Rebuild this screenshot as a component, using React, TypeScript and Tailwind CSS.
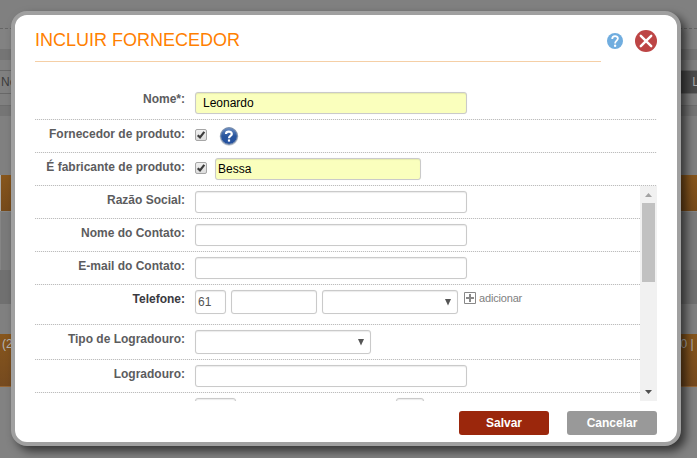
import type { ReactNode } from 'react';

const field =
  'rounded-[3px] border border-[#cacaca] bg-white shadow-[inset_0_1px_1px_rgba(0,0,0,0.08),0_0_1px_rgba(0,0,0,0.1)] outline-none text-[12px]';

function Row({ label, dark, first, className = 'h-[33px]', children }: { label: string; dark?: boolean; first?: boolean; className?: string; children?: ReactNode }) {
  return (
    <div className={`flex shrink-0 flex-col ${className}`}>
      <div className="flex min-h-0 flex-1 items-start">
        <label className={`w-[150px] shrink-0 whitespace-nowrap text-right text-[12px] leading-4 font-bold ${first ? 'pt-1' : 'pt-1.5'} ${dark ? 'text-[#3a3a40]' : 'text-[#5c5c5e]'}`}>{label}</label>
        <div className="ml-[10px] flex items-start pt-[5px]">{children}</div>
      </div>
      <Dots />
    </div>
  );
}

function Dots() {
  return <div className="h-px shrink-0 bg-[repeating-linear-gradient(90deg,#bdbdbd_0px,#bdbdbd_1px,#f4f4f4_1px,#f4f4f4_2px)]" />;
}

function Check() {
  return (
    <svg width="12" height="12" viewBox="0 0 12 12" className="mt-1 block">
      <defs>
        <linearGradient id="box" x1="0" y1="0" x2="0" y2="1">
          <stop offset="0" stopColor="#f0f0f0" />
          <stop offset="1" stopColor="#dcdcdc" />
        </linearGradient>
      </defs>
      <rect x=".5" y=".5" width="11" height="11" rx="1.5" fill="url(#box)" stroke="#a6a6a6" />
      <path d="M2.7 6.2 5 8.4 9.3 2.9" fill="none" stroke="#3c3c3c" strokeWidth="2.2" />
    </svg>
  );
}

function Help() {
  return (
    <svg width="20" height="20" viewBox="0 0 20 20" className="mt-[1px] ml-3 block">
      <defs>
        <linearGradient id="ball" x1="0" y1="0" x2="0" y2="1">
          <stop offset="0" stopColor="#6f90c4" />
          <stop offset=".5" stopColor="#28559d" />
          <stop offset="1" stopColor="#2450a0" />
        </linearGradient>
      </defs>
      <circle cx="10" cy="10.4" r="9.3" fill="#c3c8d0" />
      <circle cx="10" cy="10" r="8.3" fill="url(#ball)" stroke="#7189ab" strokeWidth="1" />
      <path d="M7 8C7 4.9 12.8 4.9 12.8 8c0 2-2.8 2-2.8 4.2" fill="none" stroke="#fff" strokeWidth="2.2" />
      <rect x="8.9" y="13.4" width="2.2" height="2.2" fill="#fff" />
    </svg>
  );
}

function Select({ className }: { className: string }) {
  return (
    <div className={`flex h-6 items-center justify-end pr-[5px] ${field} ${className}`}>
      <svg width="8" height="8" viewBox="0 0 8 8"><path d="M1 1h6L4 7.5z" fill="#555" /></svg>
    </div>
  );
}

function Backdrop() {
  return (
    <div className="flex h-[458px] flex-col bg-[#808080] text-[12px]">
      <div className="h-7" />
      <div className="h-px border-t border-dashed border-[#666]" />
      <div className="h-5 bg-[#828282]" />
      <div className="h-[11px] bg-[#757575]" />
      <div className="h-[10px] bg-[#808080]" />
      <div className="flex h-6 items-center justify-between border-y border-[#686868] bg-[#808080] text-[#3c3c3c]">
        <span className="pl-px">No</span>
        <span className="flex h-[22px] w-[18px] items-center justify-end bg-[#4a4a4a] text-[#aaa]"><span className="-mr-[2px]">L</span></span>
      </div>
      <div className="h-[11px]" />
      <div className="h-[11px] border-t border-[#6d6d6d] bg-[#757575]" />
      <div className="h-[59px] bg-[#808080]" />
      <div className="h-9 border-l border-[#aaa] bg-linear-to-b from-[#87561c] to-[#754a1b]" />
      <div className="h-[59px] border-t border-l border-[#858585] bg-[#7a7a7a]" />
      <div className="h-[34px] bg-[#707070]" />
      <div className="h-[30px] bg-[#808080]" />
      <div className="flex h-[53px] justify-between border-b border-[#956636] bg-linear-to-b from-[#87561c] to-[#754a1f] pt-px text-[#b5b5b5]">
        <span className="pl-[2px]">(2</span>
        <span className="whitespace-pre">0 | </span>
      </div>
      <div className="flex-1 bg-[#828282]" />
    </div>
  );
}

export default function App() {
  return (
    <div className="relative h-[458px] w-[697px] overflow-hidden font-['Liberation_Sans',Arial,sans-serif]">
      <Backdrop />
      <div className="absolute top-[11px] left-[11px] flex h-[435px] w-[670px] flex-col rounded-[16px] border-4 border-[#a0a0a0] bg-white px-5 shadow-[5px_5px_10px_rgba(0,0,0,0.6)]">
        <header className="flex h-[47px] shrink-0 items-start">
          <div className="h-[47px] w-[566px] border-b border-[#f5cfa6]">
            <h1 className="pt-[14px] text-[18px] leading-[22px] whitespace-nowrap text-[#ff8000]">INCLUIR FORNECEDOR</h1>
          </div>
          <svg width="16" height="16" viewBox="0 0 16 16" className="mt-[18px] ml-[6px] shrink-0">
            <circle cx="8" cy="8" r="8" fill="#70addf" />
            <path d="M5.2 6C5.2 2.2 10.9 2.3 10.9 5.6c0 2-2.8 2.2-2.8 4.8" fill="none" stroke="#fff" strokeWidth="1.8" />
            <circle cx="8.1" cy="12.8" r="1.2" fill="#fff" />
          </svg>
          <svg width="22" height="22" viewBox="0 0 22 22" className="mt-[15px] ml-3 shrink-0">
            <circle cx="11" cy="11" r="11" fill="#bd4545" />
            <path d="m5.8 5.8 10.4 10.4M16.2 5.8 5.8 16.2" stroke="#fff" strokeWidth="2.4" strokeLinecap="round" />
          </svg>
        </header>

        <div className="mt-[25px] shrink-0">
          <Row label="Nome*:" first>
            <input className={`h-[22px] w-[272px] px-[7px] text-black ${field} bg-[#faffbd]!`} defaultValue="Leonardo" />
          </Row>
          <Row label="Fornecedor de produto:">
            <Check />
            <Help />
          </Row>
          <Row label="É fabricante de produto:">
            <Check />
            <input className={`ml-2 h-[22px] w-[206px] px-[2px] text-black ${field} bg-[#faffbd]!`} defaultValue="Bessa" />
          </Row>
        </div>

        <div className="flex h-[215px] shrink-0 overflow-hidden">
          <div className="flex w-[605px] flex-col overflow-hidden">
            <Row label="Razão Social:"><input className={`h-[22px] w-[272px] ${field}`} /></Row>
            <Row label="Nome do Contato:"><input className={`h-[22px] w-[272px] ${field}`} /></Row>
            <Row label="E-mail do Contato:"><input className={`h-[22px] w-[272px] ${field}`} /></Row>
            <Row label="Telefone:" dark className="h-[40px]">
              <input className={`h-6 w-[31px] px-[2px] text-[#555] ${field}`} defaultValue="61" />
              <input className={`ml-[5px] h-6 w-[86px] ${field}`} />
              <Select className="ml-[5px] w-[136px]" />
              <svg width="12" height="12" viewBox="0 0 12 12" className="mt-[2px] ml-[6px]">
                <path d="M.5.5h11v11H.5z" fill="#fff" stroke="#888" />
                <path d="M6 2v8M2 6h8" stroke="#888" strokeWidth="2" />
              </svg>
              <span className="ml-[3px] pt-[1px] text-[11px] leading-[14px] tracking-[-0.17px] text-[#808080]">adicionar</span>
            </Row>
            <Row label="Tipo de Logradouro:" className="h-[35px]"><Select className="w-[176px]" /></Row>
            <Row label="Logradouro:"><input className={`h-[22px] w-[272px] ${field}`} /></Row>
            <Row label="">
              <input className={`h-[22px] w-[41px] ${field}`} />
              <input className={`ml-[160px] h-[22px] w-[28px] ${field}`} />
            </Row>
          </div>
          <div className="flex w-[17px] shrink-0 flex-col items-center bg-[#f1f1f1]">
            <svg width="7" height="4" viewBox="0 0 7 4" className="mt-[7px]"><path d="M0 4 3.5 0 7 4z" fill="#a3a3a3" /></svg>
            <div className="mt-[6px] h-[79px] w-[13px] bg-[#c1c1c1]" />
            <svg width="7" height="4" viewBox="0 0 7 4" className="mt-auto mb-[7px]"><path d="M0 0h7L3.5 4z" fill="#505050" /></svg>
          </div>
        </div>

        <footer className="mt-[10px] flex justify-end gap-[18px] text-[12px] font-bold text-white">
          <button className="h-6 w-[90px] rounded-[3px] bg-[#9b270c]">Salvar</button>
          <button className="h-6 w-[90px] rounded-[3px] bg-[#999]">Cancelar</button>
        </footer>
      </div>
    </div>
  );
}
